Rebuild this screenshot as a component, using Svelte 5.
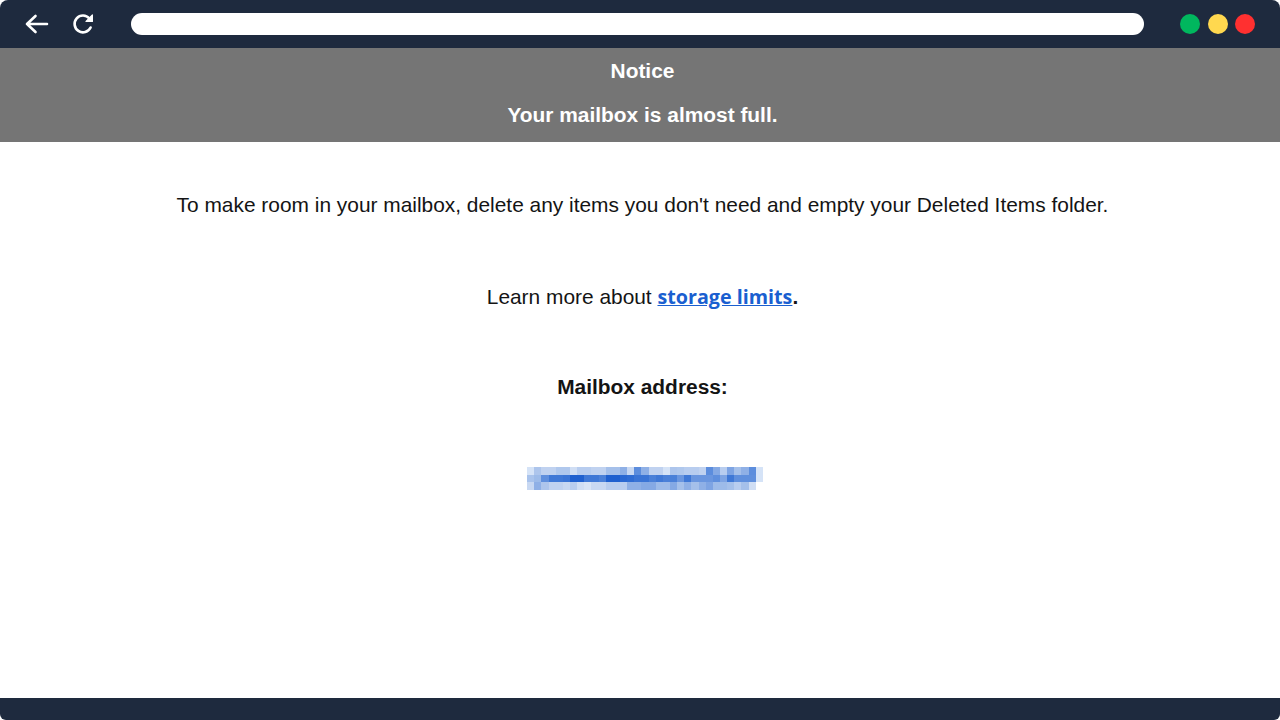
<script lang="ts">
	// pixelated address: one colour per cell, rows from top to bottom
	const blurRows: string[][] = [
		['d5e3f7', 'adc5ec', 'c0d2f0', 'c0d2f0', 'b0c8ed', 'b0c8ed', 'd0def4', 'b8cdef', 'b8cdef', 'c0d2f0', 'c0d2f0', 'a5c0ea', 'a5c0ea', '8fb0e6', 'c8d8f2', '5c8ddd', '8fb0e6', 'c0d2f0', 'c0d2f0', 'd5e3f7', 'adc5ec', 'b0c8ed', 'b8cdef', 'b8cdef', 'c0d2f0', '5c8ddd', '85a9e4', 'b8cdef', '7ea4e3', 'a5c0ea', '8fb0e6', '5c8ddd', 'd5e3f7'],
		['a9c3ec', '9dbbe9', '5f8fdd', '3f78d6', '3f78d6', '3a74d5', '1f60cf', '1f60cf', '3f78d6', '3f78d6', '4a80d8', '1f60cf', '1f60cf', '2a68d2', '2f6cd3', '3a74d5', '3a74d5', '4a80d8', '3f78d6', '4a80d8', '4a80d8', '6a96df', '3f78d6', '6a96df', '6a96df', '6a96df', '5f8fdd', '7ea4e3', '3f78d6', '5f8fdd', '5f8fdd', '5f8fdd', 'd5e3f7'],
		['c8d8f2', '8fb0e6', 'adc5ec', 'c0d2f0', 'c0d2f0', 'c8d8f2', 'b8cdef', 'd0def4', 'd8e4f6', 'c8d8f2', 'c8d8f2', 'b8cdef', 'b8cdef', 'b8cdef', '8fb0e6', '8fb0e6', '85a9e4', '85a9e4', '9dbbe9', '9dbbe9', '85a9e4', 'a5c0ea', '8fb0e6', 'a5c0ea', '8fb0e6', '7ea4e3', '9dbbe9', '9dbbe9', 'a5c0ea', 'b8cdef', 'a5c0ea', 'd0def4']
	];
</script>

<div class="window">
	<header class="toolbar">
		<div class="nav">
			<svg width="26" height="24" viewBox="0 0 26 24" fill="none" stroke="#fff" stroke-width="2.6" stroke-linecap="round" stroke-linejoin="round">
				<path d="M3 12h20M11.5 4 3 12l8.5 8" />
			</svg>
			<svg width="24" height="24" viewBox="0 0 24 24" fill="none" stroke="#fff" stroke-width="2.6" stroke-linecap="round" stroke-linejoin="round">
				<path d="M18.6 15.5a8.4 8.4 0 1 1-1.2-9" />
				<path d="M20.4 3v6.4H14l6.4-6.4z" fill="#fff" stroke-width="1.2" />
			</svg>
		</div>
		<div class="address"></div>
		<div class="lights">
			<span class="light green"></span>
			<span class="light yellow"></span>
			<span class="light red"></span>
		</div>
	</header>

	<section class="notice">
		<p>Notice</p>
		<p>Your mailbox is almost full.</p>
	</section>

	<main class="content">
		<p>To make room in your mailbox, delete any items you don't need and empty your Deleted Items folder.</p>
		<p class="learn">Learn more about <a href="#limits">storage limits</a><b>.</b></p>
		<p><b>Mailbox address:</b></p>
		<div class="redacted" aria-hidden="true">
			{#each blurRows as row}
				<div class="blur-row">
					{#each row as c}
						<span style="background:#{c}"></span>
					{/each}
				</div>
			{/each}
		</div>
	</main>

	<footer class="bottom"></footer>
</div>

<style>
	:global(body) {
		background: #fff;
	}

	.window {
		height: 720px;
		display: flex;
		flex-direction: column;
		font-family: "Liberation Sans", Arial, sans-serif;
		font-size: 20.9px;
		line-height: 24px;
		color: #141414;
		overflow: hidden;
	}

	.toolbar {
		height: 48px;
		flex: none;
		display: flex;
		align-items: center;
		background: #1e2a3e;
		border-radius: 8px 8px 0 0;
		padding: 0 24px;
	}

	.nav {
		display: flex;
		align-items: center;
		gap: 22px;
		width: 107px;
	}

	.address {
		width: 1013px;
		height: 22px;
		background: #fff;
		border-radius: 11px;
	}

	.lights {
		display: flex;
		gap: 7.5px;
		margin-left: 36px;
	}

	.light {
		width: 20px;
		height: 20px;
		border-radius: 50%;
	}

	.green {
		background: #00b75e;
	}

	.yellow {
		background: #ffd84f;
	}

	.red {
		background: #ff3030;
	}

	.notice {
		height: 94px;
		flex: none;
		box-sizing: border-box;
		padding: 11px 0 0 5px;
		display: flex;
		flex-direction: column;
		gap: 20px;
		align-items: center;
		background: #757575;
		color: #fff;
		font-weight: 700;
	}

	p {
		margin: 0;
	}

	.content {
		flex: 1;
		display: flex;
		flex-direction: column;
		align-items: center;
		gap: 67px;
		padding: 51px 0 0 5px;
	}

	.learn {
		margin: 1px 0 -1px;
	}

	a {
		font-family: "Open Sans", sans-serif;
		font-size: 19.7px;
		font-weight: 700;
		color: #1a5fd0;
		text-decoration: underline;
	}

	.redacted {
		display: flex;
		flex-direction: column;
		margin: 1px 0 0 5px;
	}

	.blur-row {
		display: flex;
		height: 7.6px;
	}

	.blur-row span {
		width: 7.15px;
	}

	.bottom {
		height: 22px;
		flex: none;
		background: #1e2a3e;
		border-radius: 0 0 6px 6px;
	}
</style>
